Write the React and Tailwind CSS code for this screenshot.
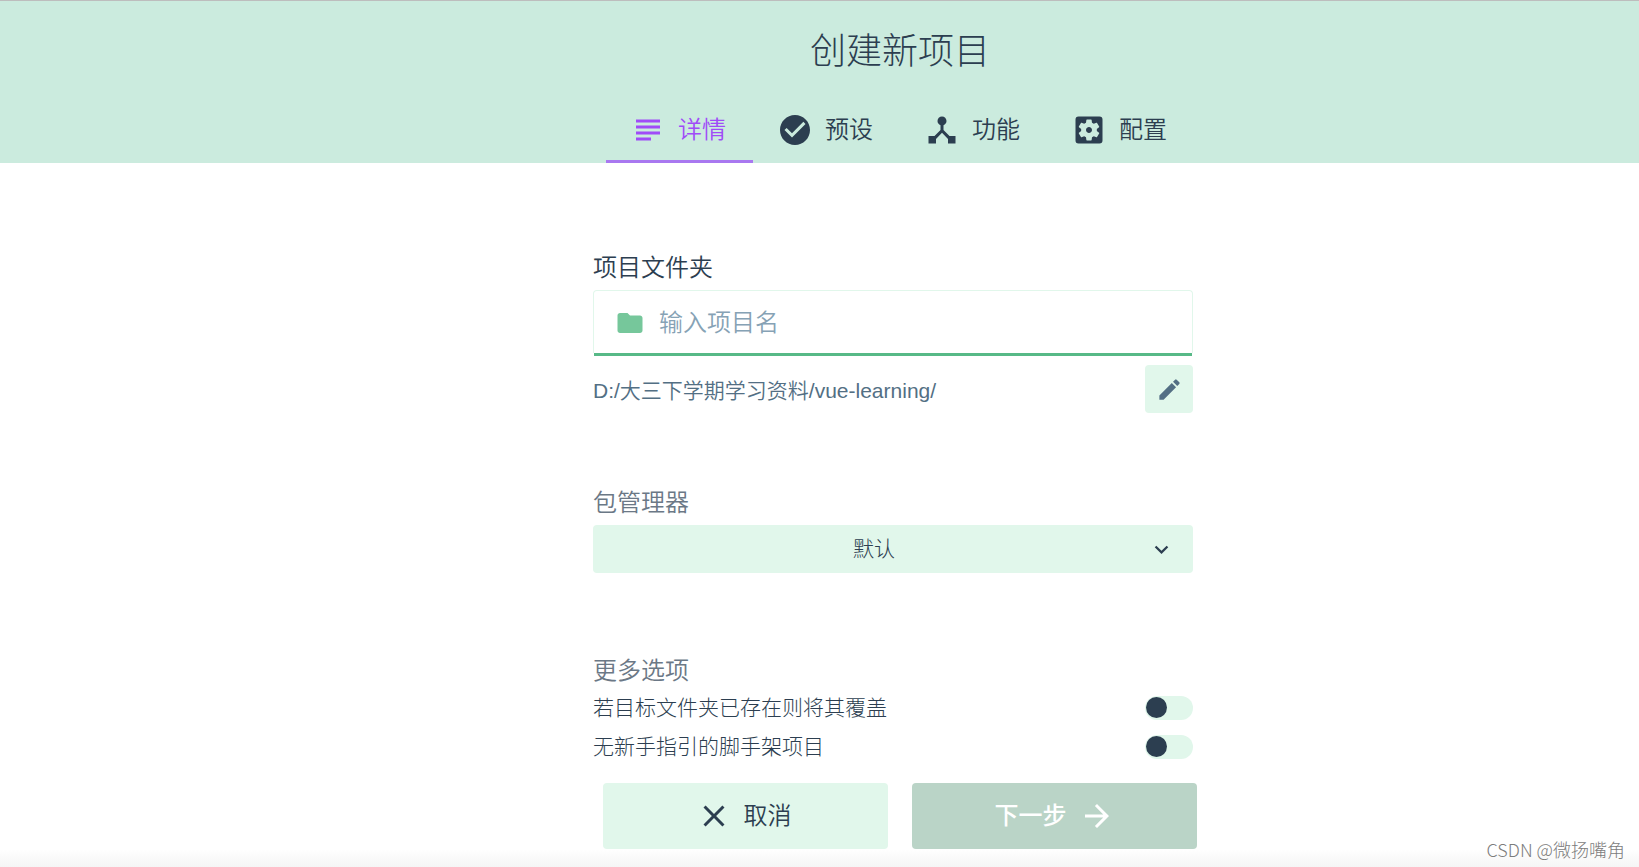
import { useState } from "react";
import {
    MdSubject,
    MdCheckCircle,
    MdDeviceHub,
    MdSettingsApplications,
    MdFolder,
    MdEdit,
    MdKeyboardArrowDown,
    MdClose,
    MdArrowForward,
} from "react-icons/md";

const tabs = [
    { id: "details", label: "详情", Icon: MdSubject },
    { id: "presets", label: "预设", Icon: MdCheckCircle },
    { id: "features", label: "功能", Icon: MdDeviceHub },
    { id: "config", label: "配置", Icon: MdSettingsApplications },
];

function Header({ active, onChange }){
    return(
        <header className="flex flex-col items-center border-t border-[#bdbdbd] bg-[#cbebde] pl-[161px]">
            <h1 className="pt-[27px] text-4xl/12 font-light">创建新项目</h1>
            <nav className="mt-[21px] flex">
                {tabs.map(({ id, label, Icon }) => (
                    <button
                        key={id}
                        type="button"
                        onClick={() => onChange(id)}
                        className={
                            active === id
                                ? "flex h-[66px] w-[147px] items-center gap-3 border-b-3 border-[#a978f0] pt-0.5 pl-6 text-2xl font-[350] text-[#a04bf8]"
                                : "flex h-[66px] w-[147px] items-center gap-3 border-b-3 border-transparent pt-0.5 pl-6 text-2xl font-[350]"
                        }
                    >
                        <Icon className="size-9" />
                        {label}
                    </button>
                ))}
            </nav>
        </header>
    )
}

function Switch({ id, label }){
    return(
        <div className="flex h-[39px] items-center justify-between">
            <label htmlFor={id} className="text-[21px] font-light">{label}</label>
            <input
                id={id}
                type="checkbox"
                role="switch"
                className="h-6 w-12 appearance-none rounded-full bg-[#e1f7eb] pt-px pl-px before:block before:size-[21px] before:rounded-full before:bg-[#2c3e50] checked:before:ml-auto"
            />
        </div>
    )
}

function DetailsForm(){
    return(
        <div className="w-full max-w-[600px]">
            <label htmlFor="folder" className="block text-2xl/9 font-[350]">项目文件夹</label>
            <div className="mt-1 flex h-[66px] flex-col">
                <div className="flex flex-1 items-center gap-3.5 rounded-t border border-b-0 border-[#e1f7eb] px-[21px] pt-0.5">
                    <MdFolder className="size-[30px] shrink-0 text-[#76c79b]" />
                    <input
                        id="folder"
                        type="text"
                        placeholder="输入项目名"
                        className="w-full bg-transparent text-2xl font-[350] outline-none placeholder:text-[#86a2b5]"
                    />
                </div>
                <div className="mx-px h-[3px] bg-[#57b987]"></div>
            </div>
            <div className="mt-[9px] flex items-center justify-between text-[#536f84]">
                <span className="pt-[3px] text-[21px] font-[350]">D:/大三下学期学习资料/vue-learning/</span>
                <button type="button" aria-label="编辑" className="flex size-12 items-center justify-center rounded bg-[#e1f7eb]">
                    <MdEdit className="size-[27px]" />
                </button>
            </div>

            <label htmlFor="manager" className="mt-[72px] block text-2xl/9 font-[350] text-[#6b7886]">包管理器</label>
            <div className="relative mt-1">
                <select
                    id="manager"
                    className="h-12 w-full appearance-none rounded bg-[#e1f7eb] pr-[38px] text-center text-[21px] font-light [text-align-last:center]"
                >
                    <option>默认</option>
                </select>
                <MdKeyboardArrowDown className="pointer-events-none absolute top-[11px] right-[18px] size-[27px]" />
            </div>

            <h2 className="mt-20 text-2xl/9 font-[350] text-[#6b7886]">更多选项</h2>
            <div className="-mt-px">
                <Switch id="overwrite" label="若目标文件夹已存在则将其覆盖" />
                <Switch id="bare" label="无新手指引的脚手架项目" />
            </div>
        </div>
    )
}

function App(){
    const [active, setActive] = useState("details");

    return(
        <div className="relative flex min-h-screen flex-col bg-white font-['Liberation_Sans','Noto_Sans_CJK_SC',sans-serif] text-[#2c3e50]">
            <Header active={active} onChange={setActive} />
            <main className="flex flex-1 flex-col items-center pt-[87px] pr-3.5 pl-[161px]">
                <DetailsForm />
            </main>
            <footer className="flex justify-center gap-6 bg-linear-to-t from-[#f5f5f5] to-white to-[18px] pt-4 pb-[18px] pl-[161px]">
                <button type="button" className="flex h-[66px] w-[285px] items-center justify-center gap-3 rounded bg-[#e1f7eb] pr-1 text-2xl font-[350]">
                    <MdClose className="size-9" />
                    取消
                </button>
                <button type="button" disabled className="flex h-[66px] w-[285px] items-center justify-center gap-3 rounded bg-[#bad4c7] text-2xl font-medium text-white">
                    下一步
                    <MdArrowForward className="size-9" />
                </button>
            </footer>
            <span className="absolute right-3.5 bottom-1.5 font-['Noto_Sans_CJK_SC',sans-serif] text-lg/6 font-light text-[#7c7c7c]">CSDN @微扬嘴角</span>
        </div>
    )
}
export default App;
